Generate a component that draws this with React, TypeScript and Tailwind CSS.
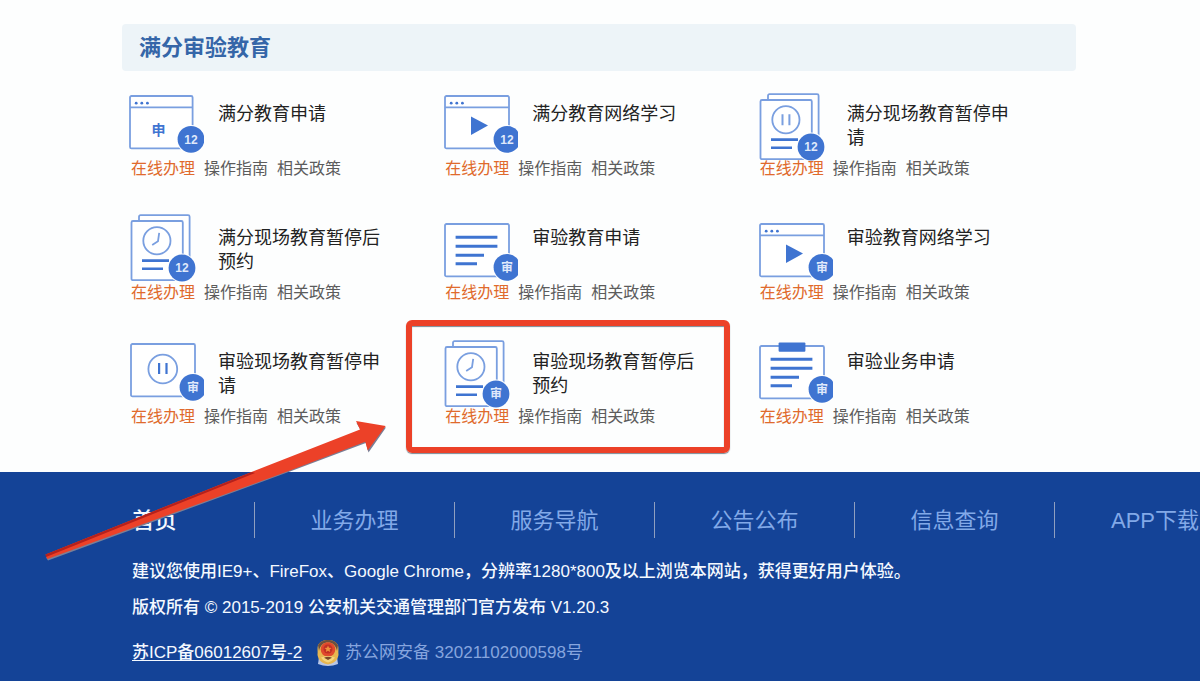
import React from "react";

type IconKind = "browser-text" | "browser-play" | "sheets-pause" | "sheets-clock" | "lines" | "pause" | "clipboard";

interface Service {
  title: string;
  icon: IconKind;
  badge: "12" | "审";
  shift: number;
  highlighted?: boolean;
}

const services: Service[] = [
  { title: "满分教育申请", icon: "browser-text", badge: "12", shift: 0 },
  { title: "满分教育网络学习", icon: "browser-play", badge: "12", shift: 0 },
  { title: "满分现场教育暂停申请", icon: "sheets-pause", badge: "12", shift: 0 },
  { title: "满分现场教育暂停后预约", icon: "sheets-clock", badge: "12", shift: -3 },
  { title: "审验教育申请", icon: "lines", badge: "审", shift: 4 },
  { title: "审验教育网络学习", icon: "browser-play", badge: "审", shift: 4 },
  { title: "审验现场教育暂停申请", icon: "pause", badge: "审", shift: 0 },
  { title: "审验现场教育暂停后预约", icon: "sheets-clock", badge: "审", shift: -1, highlighted: true },
  { title: "审验业务申请", icon: "clipboard", badge: "审", shift: 2 },
];

const navItems = ["首页", "业务办理", "服务导航", "公告公布", "信息查询", "APP下载"];

const OUTLINE = "#7a9fe0";
const SOLID = "#3f74d1";

function Frame({ x = 3, width = 64 }: { x?: number; width?: number }) {
  return <rect x={x} y="7" width={width} height="52.4" rx="1.5" fill="#fff" stroke={OUTLINE} strokeWidth="1.8" />;
}

function Browser({ x, width, children }: { x?: number; width?: number; children: React.ReactNode }) {
  const left = x ?? 3;
  return (
    <g>
      <Frame x={x} width={width} />
      <path d={`M${left} 18.4h${width ?? 64}`} stroke={OUTLINE} strokeWidth="1.6" />
      <circle cx={left + 6.2} cy="14.2" r="1.4" fill={SOLID} />
      <circle cx={left + 11.8} cy="14.2" r="1.4" fill={SOLID} />
      <circle cx={left + 17.4} cy="14.2" r="1.4" fill={SOLID} />
      {children}
    </g>
  );
}

function TextLines() {
  return (
    <path d="M13.6 20.2H55.4M13.6 29.2H55.4M13.6 38.2H42M13.6 46.8H35" stroke={SOLID} strokeWidth="3" />
  );
}

function Sheets({ children }: { children: React.ReactNode }) {
  return (
    <g fill="#fff" stroke={OUTLINE} strokeWidth="1.8">
      <rect x="11" y="5.2" width="50.6" height="58" rx="1.5" />
      <rect x="3.5" y="11" width="51.3" height="59.2" rx="1.5" />
      <circle cx="28.9" cy="30.8" r="13.6" />
      {children}
      <path d="M14 50.6H41M14 58.8H35" stroke={SOLID} strokeWidth="2.6" />
    </g>
  );
}

function ServiceIcon({ kind, badge, shift }: { kind: IconKind; badge: string; shift: number }) {
  const sheets = kind === "sheets-pause" || kind === "sheets-clock";
  const cx = sheets ? 54 : kind === "browser-text" ? 63 : 65;
  const cy = sheets ? 58 : 50.3;
  return (
    <svg width="76" height="78" viewBox="0 0 76 78" fill="none" className="shrink-0" aria-hidden="true">
      <g transform={`translate(0 ${shift})`}>
        {kind === "browser-text" && (
          <Browser x={2} width={62.6}>
            <text x="30.6" y="45.500" textAnchor="middle" fontSize="14" fontWeight="700" fill={SOLID}>
              申
            </text>
          </Browser>
        )}
        {kind === "browser-play" && (
          <Browser>
            <path d="M29 27.6V46L46 36.6Z" fill={SOLID} />
          </Browser>
        )}
        {kind === "sheets-pause" && (
          <Sheets>
            <path d="M25.5 25.3V36.3M32.4 25.3V36.3" strokeWidth="2" />
          </Sheets>
        )}
        {kind === "sheets-clock" && (
          <Sheets>
            <path d="M31.2 22.8L30 31.200L24.2 35" strokeWidth="1.8" />
          </Sheets>
        )}
        {kind === "lines" && (
          <g>
            <Frame />
            <TextLines />
          </g>
        )}
        {kind === "pause" && (
          <g>
            <Frame />
            <circle cx="34.8" cy="32" r="14.4" stroke={OUTLINE} strokeWidth="1.8" />
            <path d="M31.1 26V37M38.5 26V37" stroke={SOLID} strokeWidth="2.2" />
          </g>
        )}
        {kind === "clipboard" && (
          <g>
            <Frame />
            <TextLines />
            <rect x="21.6" y="3.4" width="26.8" height="9.4" rx="1" fill={SOLID} />
          </g>
        )}
        <circle cx={cx} cy={cy} r="14.4" fill="#fff" />
        <circle cx={cx} cy={cy} r="13.4" fill={SOLID} />
        <text x={cx} y={cy + 4.2} textAnchor="middle" fontSize="12" fontWeight="700" fill="#dfe9fb">
          {badge}
        </text>
      </g>
    </svg>
  );
}

function ServiceItem({ service }: { service: Service }) {
  return (
    <li className="relative h-[124px]">
      {service.highlighted && (
        <div className="pointer-events-none absolute -top-[17px] -left-9 h-[133px] w-[324px] rounded-md border-6 border-[#ec4128] shadow-[0_1px_1px_#7a8a96,inset_0_1px_1px_#7a8a96]" />
      )}
      <div className="flex h-17 items-start gap-[14px]">
        <ServiceIcon kind={service.icon} badge={service.badge} shift={service.shift} />
        <h3 className="w-[166px] pt-[13px] text-lg leading-6 text-[#222]">{service.title}</h3>
      </div>
      <div className="relative flex gap-[9px] pl-[3px] text-base leading-6 text-[#5c5c5c]">
        <a href="#apply" className="text-[#e06a2c]">在线办理</a>
        <a href="#guide">操作指南</a>
        <a href="#policy">相关政策</a>
      </div>
    </li>
  );
}

function PoliceEmblem() {
  return (
    <svg width="24" height="28" viewBox="0 0 24 28" aria-hidden="true">
      <path d="M3 18 2 25Q12 29 22 25L21 18Z" fill="#b9c6e6" />
      <path d="M12 1C17 1 20 3 22 6C23 10 22 12 22.500 16C21.500 22 17 24.500 12 25.500C7 24.500 2.500 22 1.500 16C2 12 1 10 2 6C4 3 7 1 12 1Z" fill="#e8b650" />
      <path d="M12 1C17 1 20 3 22 6L21 12C20 6 16 3.500 12 3.500S4 6 3 12L2 6C4 3 7 1 12 1Z" fill="#6b5040" />
      <circle cx="12" cy="10.500" r="7.300" fill="#e0492d" />
      <circle cx="12" cy="10" r="4.500" fill="#c22f25" />
      <path d="m12 6.500 1 2.300 2.500.2-1.900 1.600.6 2.400-2.200-1.300-2.200 1.300.6-2.400L8.500 9l2.500-.2Z" fill="#f0903c" />
      <path d="M5 18.500Q12 15.500 19 18.500Q16.500 22.500 12 23.500Q7.500 22.500 5 18.500Z" fill="#f6d67c" />
      <path d="M8 18.800Q12 16.800 16 18.800L12 21Z" fill="#7b4a2b" />
    </svg>
  );
}

function PointerArrow() {
  return (
    <svg
      width="350"
      height="150"
      viewBox="0 0 350 150"
      className="pointer-events-none absolute top-[415px] left-10"
      aria-hidden="true"
    >
      <path d="M6 142.500 321.500 16.500 316.500 8 346 12.500 328.500 37.500 325.800 28 250 56.500 8 145.500Z" fill="#7a7f96" />
      <path d="M5.500 139.500 214 56 320 14.500 316 6 345.700 11 327.700 35.500 325.300 26.800 250 55.500 7.300 144Z" fill="#ec4128" />
      <path d="M5.500 139.500 212 57 215 58 6 142Z" fill="#b5211c" />
    </svg>
  );
}

export default function App() {
  return (
    <div className="relative flex min-h-screen flex-col overflow-hidden bg-[#fdfefe] font-['Liberation_Sans','Noto_Sans_CJK_SC',sans-serif]">
      <main className="pt-6 pr-31 pb-[11px] pl-[122px]">
        <h2 className="rounded-[4px] bg-[#edf4f8] pl-[17px] text-[22px] leading-[47px] font-bold text-[#3566a8]">
          满分审验教育
        </h2>
        <ul className="mt-[18px] grid grid-cols-3 pr-[5px] pl-[6px]">
          {services.map((service) => (
            <ServiceItem key={service.title} service={service} />
          ))}
        </ul>
      </main>

      <footer className="flex-1 bg-[#144397] pt-[30px] pb-[10px] text-[17px] leading-9 font-medium text-[#f4f9ff]">
        <nav aria-label="页脚导航" className="overflow-hidden pl-[55px]">
          <ul className="flex text-[22px]">
            {navItems.map((item, i) => (
              <li
                key={item}
                className={
                  i === 0
                    ? "h-9 w-[200px] shrink-0 border-r border-[#8f9fc0] text-center leading-[37px]"
                    : "h-9 w-[200px] shrink-0 border-r border-[#8f9fc0] text-center leading-[37px] font-normal text-[#82a9e8] last:border-r-0"
                }
              >
                <a href="#nav">{item}</a>
              </li>
            ))}
          </ul>
        </nav>
        <div className="mt-4 pl-33">
          <p>建议您使用IE9+、FireFox、Google Chrome，分辨率1280*800及以上浏览本网站，获得更好用户体验。</p>
          <p>版权所有 © 2015-2019 公安机关交通管理部门官方发布 V1.20.3</p>
          <div className="mt-[9px] flex items-center">
            <a href="#icp" className="underline underline-offset-2">苏ICP备06012607号-2</a>
            <a href="#police" className="ml-[14px] flex items-center gap-[5px] font-normal text-[#86a5de]">
              <PoliceEmblem />
              <span>苏公网安备 32021102000598号</span>
            </a>
          </div>
        </div>
      </footer>

      <PointerArrow />
    </div>
  );
}
